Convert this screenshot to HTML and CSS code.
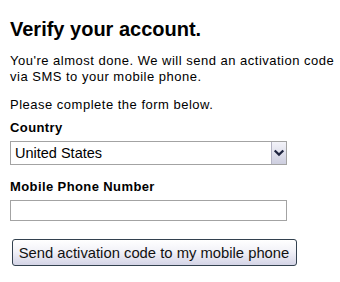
FILE: index.html
```html
<!DOCTYPE html>
<html lang="en">
<head>
<meta charset="utf-8">
<title>Verify your account</title>
<link rel="stylesheet" href="styles.css">
</head>
<body>
<div class="page">
  <h1 class="title">Verify your account.</h1>
  <p class="intro">You're almost done. We will send an activation code via SMS to your mobile phone.</p>
  <p class="note">Please complete the form below.</p>
  <form class="form">
    <label class="label label-country" for="country">Country</label>
    <div class="select-wrap">
      <select id="country" class="select">
        <option>United States</option>
      </select>
      <span class="select-arrow" aria-hidden="true">
        <svg width="14" height="14" viewBox="0 0 14 14"><path d="M3.5 5.2 L7 8.6 L10.5 5.2" fill="none" stroke="#1f2540" stroke-width="2.2" stroke-linecap="square"/></svg>
      </span>
    </div>
    <label class="label label-phone" for="phone">Mobile Phone Number</label>
    <input id="phone" class="input" type="text">
    <button type="button" class="button">Send activation code to my mobile phone</button>
  </form>
</div>
</body>
</html>
```

FILE: styles.css
```css
html, body {
  margin: 0;
  padding: 0;
  background: #ffffff;
}

.page {
  padding: 18px 10px 0 10px;
  font-family: "Liberation Sans", Arial, sans-serif;
  color: #000000;
}

.title {
  margin: 0;
  font-size: 20px;
  line-height: 22px;
  font-weight: bold;
}

.intro {
  margin: 13px 0 0 0;
  width: 330px;
  font-size: 13px;
  line-height: 15.5px;
  letter-spacing: 0.5px;
}

.note {
  margin: 13px 0 0 0;
  font-size: 13px;
  line-height: 15px;
  letter-spacing: 0.5px;
}

.form {
  display: flex;
  flex-direction: column;
  align-items: flex-start;
  margin: 0;
}

.label {
  display: block;
  font-size: 13px;
  line-height: 15px;
  font-weight: bold;
  letter-spacing: 0.4px;
}

.label-country {
  margin-top: 8px;
}

.label-phone {
  margin-top: 13.5px;
}

.select-wrap {
  position: relative;
  margin-top: 6px;
  width: 277px;
  height: 24px;
}

.select {
  -webkit-appearance: none;
  appearance: none;
  box-sizing: border-box;
  width: 100%;
  height: 24px;
  margin: 0;
  padding: 0 0 0 4px;
  border: 1px solid #a3a3a3;
  border-radius: 0;
  background: #ffffff;
  font-family: "Liberation Sans", Arial, sans-serif;
  font-size: 14.5px;
  color: #000000;
}

.select-arrow {
  position: absolute;
  top: 1px;
  right: 1px;
  bottom: 1px;
  width: 14px;
  display: flex;
  align-items: center;
  justify-content: center;
  border-left: 1px solid #b4b4c4;
  background: linear-gradient(#f3f3f9, #cdcedf);
}

.input {
  box-sizing: border-box;
  margin-top: 6px;
  width: 277px;
  height: 21px;
  padding: 0 4px;
  border: 1px solid #a3a3a3;
  border-radius: 0;
  background: #ffffff;
  font-family: "Liberation Sans", Arial, sans-serif;
  font-size: 14px;
}

.button {
  box-sizing: border-box;
  margin: 18.5px 0 0 1.5px;
  width: 285px;
  height: 27px;
  padding: 0;
  border: 1px solid #33414f;
  border-radius: 3px;
  background: linear-gradient(#ffffff 0%, #f2f2f8 45%, #d4d4e6 100%);
  font-family: "Liberation Sans", Arial, sans-serif;
  font-size: 14.8px;
  color: #111111;
  text-align: center;
}
```
